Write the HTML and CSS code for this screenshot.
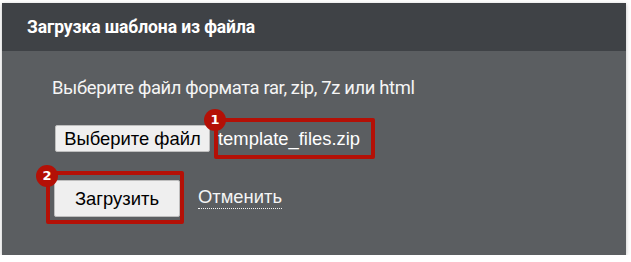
FILE: index.html
```html
<!DOCTYPE html>
<html>
    <head>
        <meta charset="utf-8">
        <meta name="viewport" content="width=device-width, initial-scale=1.0">
        <title>Загрузка шаблона</title>

        <link rel="stylesheet" href="styles.css">
    </head>
    <body>
        <div class="panel">
            <div class="panel-header">
                <h1>Загрузка шаблона из файла</h1>
            </div>
            <div class="panel-body">
                <p class="hint">Выберите файл формата rar, zip, 7z или html</p>
                <div class="file-row">
                    <button type="button" class="btn btn-file">Выберите файл</button>
                    <span class="file-name mark">
                        <span class="badge badge-1">1</span>
                        template_files.zip
                    </span>
                </div>
                <div class="actions">
                    <div class="mark mark-upload">
                        <span class="badge badge-2">2</span>
                        <button type="submit" class="btn btn-upload">Загрузить</button>
                    </div>
                    <a class="cancel">Отменить</a>
                </div>
            </div>
        </div>
    </body>
</html>
```

FILE: styles.css
```css
:root {
    --head: rgb(63, 66, 70);
    --bg: rgb(91, 94, 97);
    --fg: rgb(245, 245, 245);
    --mark: rgb(180, 16, 6);
}

body {
    background-color: #fff;
    margin: 0;
    padding: 3px 0 0 2px;
    font-family: Roboto, "Noto Sans", sans-serif;
}

.panel {
    width: 624px;
    height: 252px;
    background-color: var(--bg);
    box-shadow: 0 1px 4px rgba(0, 0, 0, 0.25);
    display: flex;
    flex-direction: column;
}

.panel-header {
    height: 48px;
    background-color: var(--head);
    display: flex;
    align-items: center;
    padding: 0 25px;
    box-sizing: border-box;
}

h1 {
    margin: 0;
    color: #fff;
    font-size: 17.5px;
    font-weight: 700;
    letter-spacing: -0.1px;
}

.panel-body {
    padding: 24px 0 0 50px;
}

.hint {
    margin: 0 0 17px;
    color: var(--fg);
    font-size: 18.4px;
    line-height: 26px;
    letter-spacing: -0.35px;
}

.btn {
    font-family: "Liberation Sans", Arial, sans-serif;
    font-size: 18.4px;
    color: #000;
    background-color: rgb(239, 239, 239);
    border: 1px solid rgb(190, 190, 190);
    border-radius: 2px;
    margin: 0;
    cursor: pointer;
}

.file-row {
    display: flex;
    align-items: center;
    margin-left: 3px;
}

.btn-file {
    width: 155px;
    height: 27px;
    padding: 0 6px;
}

.mark {
    position: relative;
    border: 4px solid var(--mark);
    border-radius: 2px;
}

.file-name {
    margin-left: 4px;
    width: 153px;
    height: 33px;
    display: flex;
    align-items: center;
    color: #fff;
    font-family: "Liberation Sans", Arial, sans-serif;
    font-size: 18.4px;
}

.badge {
    position: absolute;
    width: 22px;
    height: 22px;
    border-radius: 50%;
    background-color: var(--mark);
    color: #fff;
    font-family: "DejaVu Sans", sans-serif;
    font-weight: 700;
    font-size: 13px;
    line-height: 22px;
    text-align: center;
}

.badge-1 {
    left: -14px;
    top: -13px;
}

.badge-2 {
    left: -14px;
    top: -10px;
}

.actions {
    display: flex;
    align-items: center;
    margin-top: 12px;
    margin-left: -6px;
}

.mark-upload {
    padding: 5px 0 3px 4px;
}

.btn-upload {
    display: block;
    width: 126px;
    height: 37px;
}

.cancel {
    margin-left: 14px;
    color: var(--fg);
    font-family: "Liberation Sans", Arial, sans-serif;
    font-size: 18.4px;
    line-height: 22px;
    text-decoration: none;
    border-bottom: 1px dotted var(--fg);
    cursor: pointer;
}
```
